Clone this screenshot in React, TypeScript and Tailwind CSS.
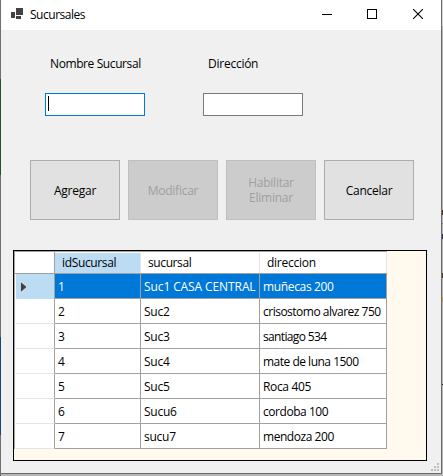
const rows = [
  { id: '1', name: 'Suc1 CASA CENTRAL', address: 'muñecas 200', nameTrack: 'tracking-[-0.1px]', track: 'tracking-[-0.35px]' },
  { id: '2', name: 'Suc2', address: 'crisostomo alvarez 750', nameTrack: 'tracking-[-0.25px]', track: 'tracking-[-0.5px]' },
  { id: '3', name: 'Suc3', address: 'santiago 534', nameTrack: 'tracking-[-0.25px]', track: 'tracking-[-0.65px]' },
  { id: '4', name: 'Suc4', address: 'mate de luna 1500', nameTrack: 'tracking-[-0.25px]', track: 'tracking-[-0.5px]' },
  { id: '5', name: 'Suc5', address: 'Roca 405', nameTrack: 'tracking-[-0.25px]', track: 'tracking-[-0.35px]' },
  { id: '6', name: 'Sucu6', address: 'cordoba 100', nameTrack: 'tracking-[-0.25px]', track: 'tracking-[-0.45px]' },
  { id: '7', name: 'sucu7', address: 'mendoza 200', nameTrack: 'tracking-[-0.25px]', track: 'tracking-[-0.45px]' },
];

const grip = [[6, 0], [3, 3], [6, 3], [0, 6], [3, 6], [6, 6]];

function TitleBar() {
  return (
    <header className="flex h-[30px] shrink-0 items-center bg-white pl-2.5">
      <svg width="12" height="12" viewBox="0 0 12 12" shapeRendering="crispEdges" fill="#424242" className="-mt-0.5">
        <path d="M0 4h4v6H0zM5 0h7v7H5zM5 8h5v3H5z" />
      </svg>
      <h1 className="ml-[7px] flex-1 tracking-[-0.48px]">Sucursales</h1>
      <svg width="10" height="10" shapeRendering="crispEdges" className="-mt-0.5 mr-[35px]">
        <path d="M0 5h10v1H0z" />
      </svg>
      <svg width="10" height="10" shapeRendering="crispEdges" className="-mt-0.5 mr-9">
        <path d="M.5 .5h9v9h-9z" fill="none" stroke="#000" />
      </svg>
      <svg width="10" height="10" className="-mt-0.5 mr-[18px]">
        <path d="M0 0L10 10M10 0L0 10" fill="none" stroke="#000" strokeWidth="1.1" />
      </svg>
    </header>
  );
}

function Field({ label, focused }: { label: string; focused?: boolean }) {
  return (
    <div className="w-[100px]">
      <div className={`h-[39px] whitespace-nowrap pl-[5px] leading-[19px] ${focused ? 'tracking-[-0.4px]' : ''}`}>{label}</div>
      <div className={`flex h-[23px] border bg-white pl-0.5 pt-0.5 ${focused ? 'border-[#0078d7]' : 'border-[#7a7a7a]'}`}>
        {focused && <div className="h-[15px] w-px bg-black" />}
      </div>
    </div>
  );
}

function ActionButton({ lines, disabled }: { lines: string[]; disabled?: boolean }) {
  return (
    <button
      disabled={disabled}
      className={`flex h-[60px] w-[90px] flex-col items-center justify-center border leading-[15px] ${
        disabled ? 'border-[#bfbfbf] bg-[#cccccc] text-[#a0a0a0]' : 'border-[#adadad] bg-[#e1e1e1]'
      }`}
    >
      {lines.map((line) => <span key={line}>{line}</span>)}
    </button>
  );
}

function Grid() {
  return (
    <div className="ml-3 mt-[30px] h-[211px] w-[414px] border border-black bg-[#fff9ee]">
      <div className="w-[373px] border-l border-t border-[#a0a0a0] bg-white">
        <div className="flex h-[22px] border-b border-[#a0a0a0] leading-[20px]">
          <div className="w-10 border-r border-[#a0a0a0]" />
          <div className="mt-px w-[86px] border-r border-[#e5e5e5] bg-[#bcdcf4] pl-[7px] tracking-[-0.35px]">idSucursal</div>
          <div className="mt-px w-[119px] border-r border-[#e5e5e5] pl-[7px] tracking-[-0.4px]">sucursal</div>
          <div className="mt-px w-[127px] border-r border-[#e5e5e5] pl-[7px]">direccion</div>
        </div>
        {rows.map(({ id, name, address, nameTrack, track }, i) => (
          <div key={id} className={`flex h-[25px] leading-[25px] ${i === 0 ? 'text-white' : ''}`}>
            <div className={`ml-px w-[39px] border-b border-r border-r-[#a0a0a0] pl-1 ${i === 0 ? 'border-b-[#bcdcf4] bg-[#bcdcf4]' : 'border-b-[#e5e5e5]'}`}>
              {i === 0 && (
                <svg width="8" height="12" viewBox="0 0 8 12" className="mt-[7px]">
                  <path d="M.5 .5L7 6L.5 11.5Z" fill="#404040" stroke="#fff" strokeWidth=".6" />
                </svg>
              )}
            </div>
            <div className={`w-[86px] border-b border-r border-[#a0a0a0] pl-[3px] ${i === 0 ? 'bg-[#0078d7]' : ''}`}>{id}</div>
            <div className={`w-[119px] whitespace-nowrap border-b border-r border-[#a0a0a0] pl-[3px] ${nameTrack} ${i === 0 ? 'bg-[#0078d7]' : ''}`}>{name}</div>
            <div className={`w-[127px] whitespace-nowrap border-b border-r border-[#a0a0a0] pl-[3px] ${track} ${i === 0 ? 'bg-[#0078d7]' : ''}`}>{address}</div>
          </div>
        ))}
      </div>
    </div>
  );
}

export default function App() {
  return (
    <div className="flex h-[476px] w-[443px] overflow-hidden bg-[#b5b5b5] font-['Open_Sans',sans-serif] text-[12px] tracking-[-0.25px] text-black">
      <div className="flex w-px flex-col bg-[#707070]">
        <div className="mt-[79px] h-24 bg-[#24502f]" />
        <div className="mt-[162px] h-[98px] bg-[#174875]" />
      </div>
      <div className="flex h-[474px] w-[441px] flex-col border-b border-r border-[#6b6b6b] bg-[#f0f0f0]">
        <TitleBar />
        <div className="flex gap-[58px] pl-11 pt-6">
          <Field label="Nombre Sucursal" focused />
          <Field label="Dirección" />
        </div>
        <div className="mt-11 flex gap-2 pl-[29px]">
          <ActionButton lines={['Agregar']} />
          <ActionButton lines={['Modificar']} disabled />
          <ActionButton lines={['Habilitar', 'Eliminar']} disabled />
          <ActionButton lines={['Cancelar']} />
        </div>
        <Grid />
        <svg width="8" height="8" shapeRendering="crispEdges" fill="#bfbfbf" className="ml-auto mr-0.5 mt-0.5 shrink-0">
          {grip.map(([x, y]) => <rect key={`${x}-${y}`} x={x} y={y} width="2" height="2" />)}
        </svg>
      </div>
      <div className="flex w-px flex-col">
        <div className="h-[26px] bg-[#d4d4d4]" />
        <div className="mt-[184px] h-[5px] bg-[#4a3520]" />
        <div className="mt-2 h-px bg-[#777777]" />
        <div className="mt-2.5 h-[5px] bg-[#30304a]" />
        <div className="mt-[34px] h-[5px] bg-[#5a3b1c]" />
        <div className="mt-[19px] h-[5px] bg-[#b0a060]" />
        <div className="mt-[82px] h-px bg-[#222222]" />
      </div>
    </div>
  );
}
